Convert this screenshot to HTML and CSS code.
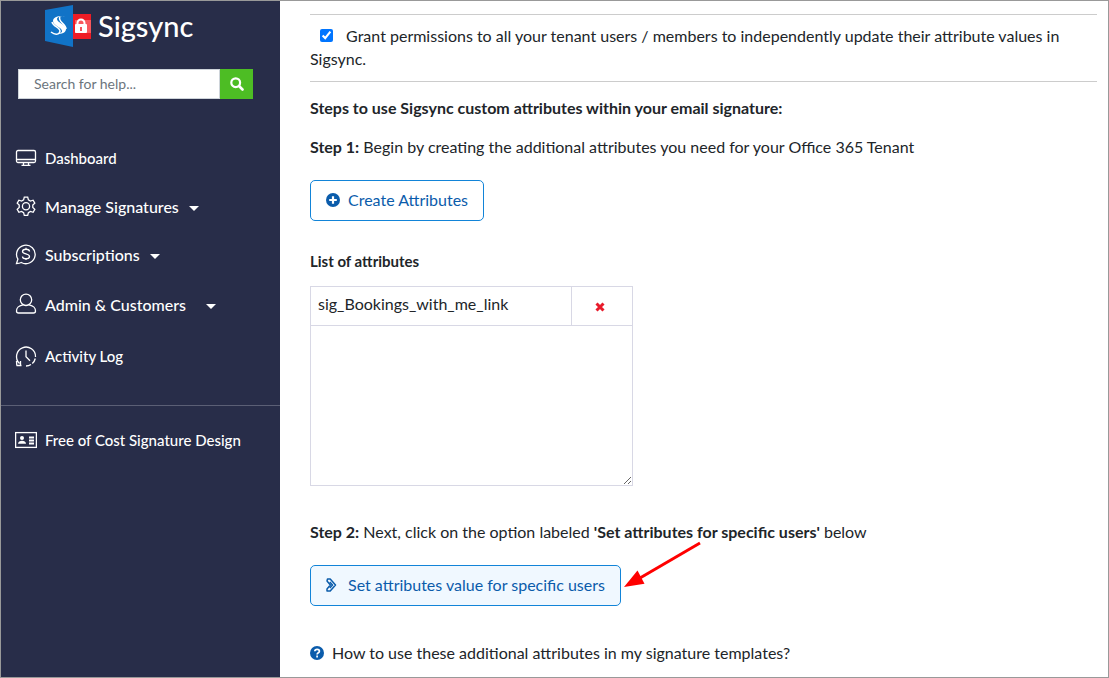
FILE: index.html
```html
<!DOCTYPE html>
<html lang="en">
<head>
    <meta charset="UTF-8">
    <meta name="viewport" content="width=device-width, initial-scale=1.0">
    <title>Sigsync - Custom Attributes</title>
    <link rel="stylesheet" href="styles.css">
</head>
<body>
    <div class="page">
        <!-- Sidebar -->
        <aside class="sidebar">
            <a class="logo" href="#">
                <svg class="logo-mark" width="47" height="42" viewBox="0 0 47 42" aria-hidden="true">
                    <rect x="27" y="9" width="19" height="25" fill="#ee1c25"/>
                    <rect x="30" y="15" width="16" height="13" fill="#f8575c"/>
                    <path d="M0 5L28 0v42L0 36z" fill="#1173c7"/>
                    <path d="M20 12c-6-2-12 0-12 4 0 5 9 6 9 10 0 2-3 3-5 3 6 0 9-2 9-5 0-5-9-6-9-10 0-2 3-3 8-2z" fill="#fff"/>
                    <path d="M15 12c-3 4 6 7 6 12M6 27c5 4 9 2 9-1 0-3-7-5-8-9" fill="none" stroke="#fff" stroke-width="1.5"/>
                    <rect x="30" y="19" width="12" height="9" rx="1" fill="#fff"/>
                    <path d="M32.5 20v-2a3.500 3.500 0 0 1 7 0v2" fill="none" stroke="#fff" stroke-width="2"/>
                    <path d="M36 22v4" stroke="#ee1c25" stroke-width="1.5"/>
                </svg>
                <span class="logo-text">Sigsync</span>
            </a>

            <form class="search">
                <input type="text" class="search-input" placeholder="Search for help..." aria-label="Search for help">
                <button type="submit" class="search-button" aria-label="Search">
                    <svg width="14" height="14" viewBox="0 0 14 14" fill="none" stroke="#fff" aria-hidden="true">
                        <circle cx="5.7" cy="5.7" r="4.4" stroke-width="2.2"/>
                        <path d="M9 9l3.500 3.500" stroke-width="2.6" stroke-linecap="round"/>
                    </svg>
                </button>
            </form>

            <nav class="menu">
                <a class="menu-item" href="#">
                    <svg class="menu-icon" viewBox="0 0 22 22">
                        <rect x="1.5" y="3.5" width="19" height="12" rx="1.5"/>
                        <path d="M1.500 12.500h19M8.500 16v2M13.500 16v2M6.500 18.300h9"/>
                    </svg>
                    Dashboard
                </a>
                <a class="menu-item menu-parent" href="#">
                    <svg class="menu-icon" viewBox="0 0 22 22">
                        <path d="M9.300 2.200h3.400l.7 2.600 2 1.200 2.700-.8 1.700 3-2 1.900v2.300l2 1.900-1.700 3-2.700-.8-2 1.200-.7 2.600H9.300l-.7-2.600-2-1.200-2.700.8-1.700-3 2-1.900v-2.300l-2-1.900 1.700-3 2.700.8 2-1.200z"/>
                        <circle cx="11" cy="11.200" r="3.600"/>
                    </svg>
                    Manage Signatures
                    <span class="caret"></span>
                </a>
                <a class="menu-item menu-parent" href="#">
                    <svg class="menu-icon" viewBox="0 0 22 22">
                        <path d="M1.500 20.500l1.400-4.300A9.300 9.300 0 1 1 6.300 19.500c-1.500.8-3 1-4.800 1z"/>
                        <path d="M14.500 8.500c0-3-7-3-7 0 0 3 7 1.800 7 4.900 0 3-7 3-7 0M11 4.800v1.500M11 15.600v1.500"/>
                    </svg>
                    Subscriptions
                    <span class="caret"></span>
                </a>
                <a class="menu-item menu-parent menu-item-tall" href="#">
                    <svg class="menu-icon" viewBox="0 0 22 22">
                        <path d="M8 11.800C3 13 1.500 14.500 1.500 18c0 1.500.8 2 2 2h15c1.200 0 2-.5 2-2 0-3.500-1.500-5-6.500-6.200"/>
                        <circle cx="11" cy="6.800" r="5.700"/>
                    </svg>
                    Admin &amp; Customers
                    <span class="caret caret-far"></span>
                </a>
                <a class="menu-item menu-item-tall" href="#">
                    <svg class="menu-icon" viewBox="0 0 22 22">
                        <path d="M4.500 18.500A9.500 9.500 0 1 1 20.500 12M20.300 13.500a9.500 9.500 0 0 1-3 5M16 19.500a9.500 9.500 0 0 1-5 1.500M1.500 16l.3 4.500M1.500 20.500h5M5.500 16v4.500"/>
                        <path d="M11 5.500v6.200l4 4"/>
                    </svg>
                    Activity Log
                </a>
            </nav>

            <div class="menu-extra">
                <a class="menu-item" href="#">
                    <svg class="menu-icon" viewBox="0 0 22 22">
                        <rect x=".6" y="3.600" width="20.800" height="14.800"/>
                        <circle class="solid" cx="7" cy="9" r="2"/>
                        <path class="solid" d="M3 14.800c0-4 8-4 8 0z"/>
                        <path class="lines" d="M14 8.500h5M14 11.500h5M14 14.500h5"/>
                    </svg>
                    Free of Cost Signature Design
                </a>
            </div>
        </aside>

        <!-- Main content -->
        <main class="content">
            <div class="permission">
                <input type="checkbox" id="grant" class="permission-check" checked>
                <label for="grant">Grant permissions to all your tenant users / members to independently update their attribute values in Sigsync.</label>
            </div>

            <p class="steps-title"><strong>Steps to use Sigsync custom attributes within your email signature:</strong></p>
            <p class="step"><strong>Step 1:</strong> Begin by creating the additional attributes you need for your Office 365 Tenant</p>

            <button type="button" class="btn">
                <svg class="btn-icon" viewBox="0 0 14 14" aria-hidden="true">
                    <circle cx="7" cy="7" r="7" fill="#0b5cab"/>
                    <path d="M7 3.200v7.600M3.200 7h7.600" stroke="#fff" stroke-width="2.2"/>
                </svg>
                Create Attributes
            </button>

            <h2 class="list-title">List of attributes</h2>
            <div class="attribute-box">
                <table class="attributes">
                    <tr>
                        <td>sig_Bookings_with_me_link</td>
                        <td class="attribute-delete">
                            <button type="button" class="delete" aria-label="Delete">
                                <svg width="10" height="10" viewBox="0 0 10 10" aria-hidden="true">
                                    <path d="M1.500 1.500l7 7M8.500 1.500l-7 7" stroke="#e81b2b" stroke-width="3"/>
                                </svg>
                            </button>
                        </td>
                    </tr>
                </table>
            </div>

            <p class="step"><strong>Step 2:</strong> Next, click on the option labeled <strong>'Set attributes for specific users'</strong> below</p>

            <div class="pointed">
                <button type="button" class="btn btn-active">
                    <svg class="btn-icon" viewBox="0 0 14 14" fill="none" stroke="#0b5cab" stroke-width="1.5" stroke-linejoin="round" aria-hidden="true">
                        <path d="M1.500 1h2.700l5.300 6-5.300 6H1V11l3.400-4L1 3z"/>
                        <path d="M3.800 4L6.500 7l-2.700 3"/>
                    </svg>
                    Set attributes value for specific users
                </button>
                <svg class="arrow" width="78" height="48" viewBox="0 0 78 48" aria-hidden="true">
                    <path d="M76 2L16 37" stroke="#f00" stroke-width="3"/>
                    <path d="M0 46l13.500-16.500 7 13.200z" fill="#f00"/>
                </svg>
            </div>

            <a class="help" href="#">
                <svg class="help-icon" viewBox="0 0 14 14" aria-hidden="true">
                    <circle cx="7" cy="7" r="7" fill="#0b5cab"/>
                    <path d="M4.800 5.200c.2-2.600 4.600-2.500 4.600 0 0 1.600-2.300 1.500-2.300 3.300M7.100 9.600v1.800" fill="none" stroke="#fff" stroke-width="1.7"/>
                </svg>
                How to use these additional attributes in my signature templates?
            </a>
        </main>
    </div>
</body>
</html>
```

FILE: styles.css
```css
* {
    box-sizing: border-box;
}

body {
    margin: 0;
    font-family: Lato, sans-serif;
    font-size: 16px;
    line-height: 23px;
    color: #212529;
    background-color: #fff;
}

a {
    color: inherit;
    text-decoration: none;
}

button,
input {
    font-family: inherit;
}

.page {
    display: flex;
    min-height: 100vh;
    border: 1px solid #999;
}

/* Sidebar */
.sidebar {
    flex: 0 0 279px;
    min-width: 0;
    background-color: #282d49;
    color: #fff;
}

.logo {
    display: flex;
    align-items: center;
    gap: 6px;
    padding: 4px 0 0 44px;
}

.logo-text {
    font-size: 29px;
    font-weight: 500;
    line-height: 42px;
}

.search {
    display: flex;
    margin: 22px 27px 0 17px;
}

.search-input {
    flex: 1;
    min-width: 0;
    height: 30px;
    padding: 0 15px 2px;
    border: 1px solid #ced4da;
    border-radius: 0;
    font-size: 14px;
}

.search-input::placeholder {
    color: #6c757d;
}

.search-button {
    display: flex;
    align-items: center;
    justify-content: center;
    width: 33px;
    padding: 0;
    border: none;
    background-color: #4dbd24;
    cursor: pointer;
}

.menu {
    padding: 36px 0 22px;
    border-bottom: 1px solid #5b5f75;
}

.menu-item {
    display: flex;
    align-items: center;
    height: 48px;
    padding: 0 0 2px 14px;
    font-size: 15px;
    font-weight: 500;
}

.menu-parent {
    font-size: 16px;
}

.menu-item-tall {
    height: 52px;
}

.menu-icon {
    width: 22px;
    height: 22px;
    margin-right: 8px;
    fill: none;
    stroke: #fff;
    stroke-width: 1.3;
}

.menu-icon .solid {
    fill: #fff;
    stroke: none;
}

.menu-icon .lines {
    stroke-width: 1.8;
}

.caret {
    margin: 4px 0 0 10px;
    border-top: 5px solid #fff;
    border-left: 5px solid transparent;
    border-right: 5px solid transparent;
}

.caret-far {
    margin-left: 20px;
}

.menu-extra {
    padding-top: 11px;
}

/* Content */
.content {
    flex: 1;
    min-width: 0;
    padding: 13px 11px 0 30px;
}

.content p {
    margin: 0;
}

.permission {
    padding: 9px 0 11px;
    border-top: 1px solid #ccc;
    border-bottom: 1px solid #ccc;
}

.permission-check {
    width: 13px;
    height: 13px;
    margin: 0 9px 0 10px;
    accent-color: #0075ff;
}

.content .steps-title {
    margin: 14px 0 16px;
}

.btn {
    display: flex;
    align-items: center;
    height: 41px;
    margin-top: 22px;
    padding: 0 15px 2px;
    border: 1px solid #1284d8;
    border-radius: 5px;
    background-color: #fff;
    color: #0b5cab;
    font-size: 16px;
    cursor: pointer;
}

.btn-active {
    background-color: #f0f8ff;
}

.btn-icon {
    width: 14px;
    height: 14px;
    margin-right: 8px;
}

.list-title {
    margin: 29px 0 13px;
    font-size: 15px;
    font-weight: 700;
    line-height: 23px;
}

.attribute-box {
    width: 323px;
    max-width: 100%;
    height: 200px;
    margin-bottom: 34px;
    border: 1px solid #d8d8e5;
    overflow: auto;
    resize: both;
}

.attributes {
    width: 100%;
    border-collapse: collapse;
}

.attributes td {
    height: 38px;
    padding: 0 7px 4px;
    border-bottom: 1px solid #d8d8e5;
}

.attributes .attribute-delete {
    width: 61px;
    padding: 0 3px 0 0;
    border-left: 1px solid #d8d8e5;
    text-align: center;
}

.delete {
    display: inline-flex;
    padding: 0;
    border: none;
    background: none;
    cursor: pointer;
}

.pointed {
    position: relative;
    width: fit-content;
}

/* Red arrow lying over the text and the button */
.arrow {
    position: absolute;
    left: calc(100% + 3px);
    bottom: 17px;
}

.help {
    display: flex;
    align-items: center;
    margin-top: 35px;
}

.help-icon {
    width: 14px;
    height: 14px;
    margin-right: 8px;
}
```
